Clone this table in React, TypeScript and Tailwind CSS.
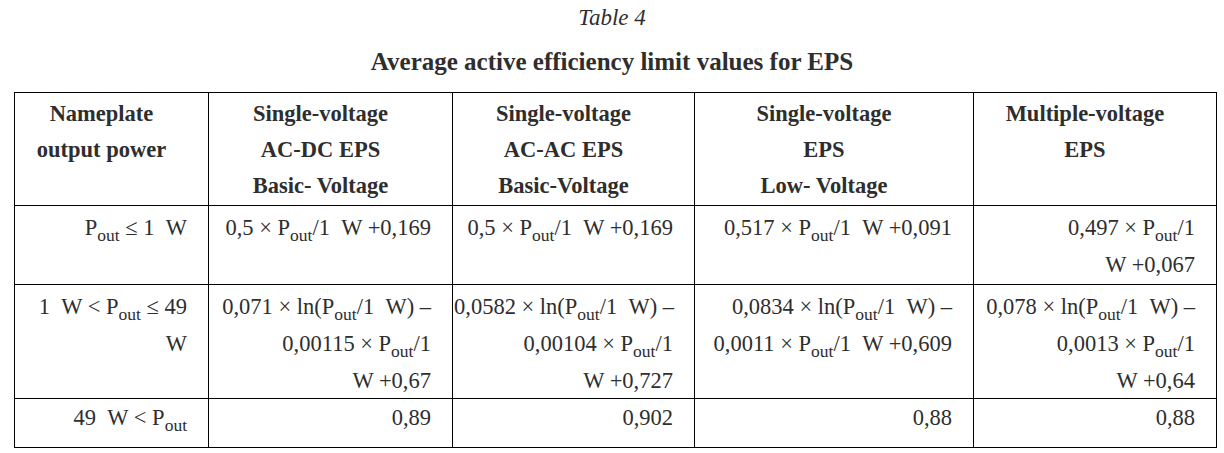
import React from "react";

const P = () => (
  <>
    P<span className="relative top-[6px] text-[17.5px]">out</span>
  </>
);

const S = "\u00a0\u00a0";

const Line = ({ children }: { children: React.ReactNode }) => (
  <div className="whitespace-nowrap">{children}</div>
);

const th =
  "border border-black align-top text-center font-bold text-[22.5px] leading-[36px] pt-[3px] pl-[1px] pr-[21px]";
const td =
  "border border-black align-top text-right text-[22.5px] leading-[35px] pt-[4px] pl-[1px] pr-[21px]";

export default function App() {
  return (
    <div className="w-[1224px] h-[453px] bg-white text-[#2e2e2e] font-['Liberation_Serif',serif] overflow-hidden">
      <div className="pt-[4px] text-center italic text-[23px] leading-[28px]">Table 4</div>
      <div className="mt-[15px] text-center font-bold text-[25px] leading-[30px]">
        Average active efficiency limit values for EPS
      </div>
      <table className="mt-[15px] ml-[14px] w-[1203px] table-fixed border-collapse">
        <colgroup>
          <col className="w-[194px]" />
          <col className="w-[244px]" />
          <col className="w-[242px]" />
          <col className="w-[279px]" />
          <col className="w-[243px]" />
        </colgroup>
        <tbody>
          <tr className="h-[113px]">
            <th className={th}>
              <Line>Nameplate</Line>
              <Line>output power</Line>
            </th>
            <th className={th}>
              <Line>Single-voltage</Line>
              <Line>AC-DC EPS</Line>
              <Line>Basic- Voltage</Line>
            </th>
            <th className={th}>
              <Line>Single-voltage</Line>
              <Line>AC-AC EPS</Line>
              <Line>Basic-Voltage</Line>
            </th>
            <th className={th}>
              <Line>Single-voltage</Line>
              <Line>EPS</Line>
              <Line>Low- Voltage</Line>
            </th>
            <th className={th}>
              <Line>Multiple-voltage</Line>
              <Line>EPS</Line>
            </th>
          </tr>
          <tr className="h-[79px]">
            <td className={td}>
              <Line>
                <P /> ≤ 1{S}W
              </Line>
            </td>
            <td className={td}>
              <Line>
                0,5 × <P />/1{S}W +0,169
              </Line>
            </td>
            <td className={td}>
              <Line>
                0,5 × <P />/1{S}W +0,169
              </Line>
            </td>
            <td className={td}>
              <Line>
                0,517 × <P />/1{S}W +0,091
              </Line>
            </td>
            <td className={td}>
              <Line>
                0,497 × <P />/1
              </Line>
              <Line>W +0,067</Line>
            </td>
          </tr>
          <tr className="h-[114px]">
            <td className={td}>
              <Line>
                1{S}W &lt; <P /> ≤ 49
              </Line>
              <Line>W</Line>
            </td>
            <td className={td}>
              <Line>
                0,071 × ln(<P />/1{S}W) –
              </Line>
              <Line>
                0,00115 × <P />/1
              </Line>
              <Line>W +0,67</Line>
            </td>
            <td className={td}>
              <Line>
                0,0582 × ln(<P />/1{S}W) –
              </Line>
              <Line>
                0,00104 × <P />/1
              </Line>
              <Line>W +0,727</Line>
            </td>
            <td className={td}>
              <Line>
                0,0834 × ln(<P />/1{S}W) –
              </Line>
              <Line>
                0,0011 × <P />/1{S}W +0,609
              </Line>
            </td>
            <td className={td}>
              <Line>
                0,078 × ln(<P />/1{S}W) –
              </Line>
              <Line>
                0,0013 × <P />/1
              </Line>
              <Line>W +0,64</Line>
            </td>
          </tr>
          <tr className="h-[49px]">
            <td className={td + " !pt-[1px]"}>
              <Line>
                49{S}W &lt; <P />
              </Line>
            </td>
            <td className={td + " !pt-[1px]"}>
              <Line>0,89</Line>
            </td>
            <td className={td + " !pt-[1px]"}>
              <Line>0,902</Line>
            </td>
            <td className={td + " !pt-[1px]"}>
              <Line>0,88</Line>
            </td>
            <td className={td + " !pt-[1px]"}>
              <Line>0,88</Line>
            </td>
          </tr>
        </tbody>
      </table>
    </div>
  );
}
